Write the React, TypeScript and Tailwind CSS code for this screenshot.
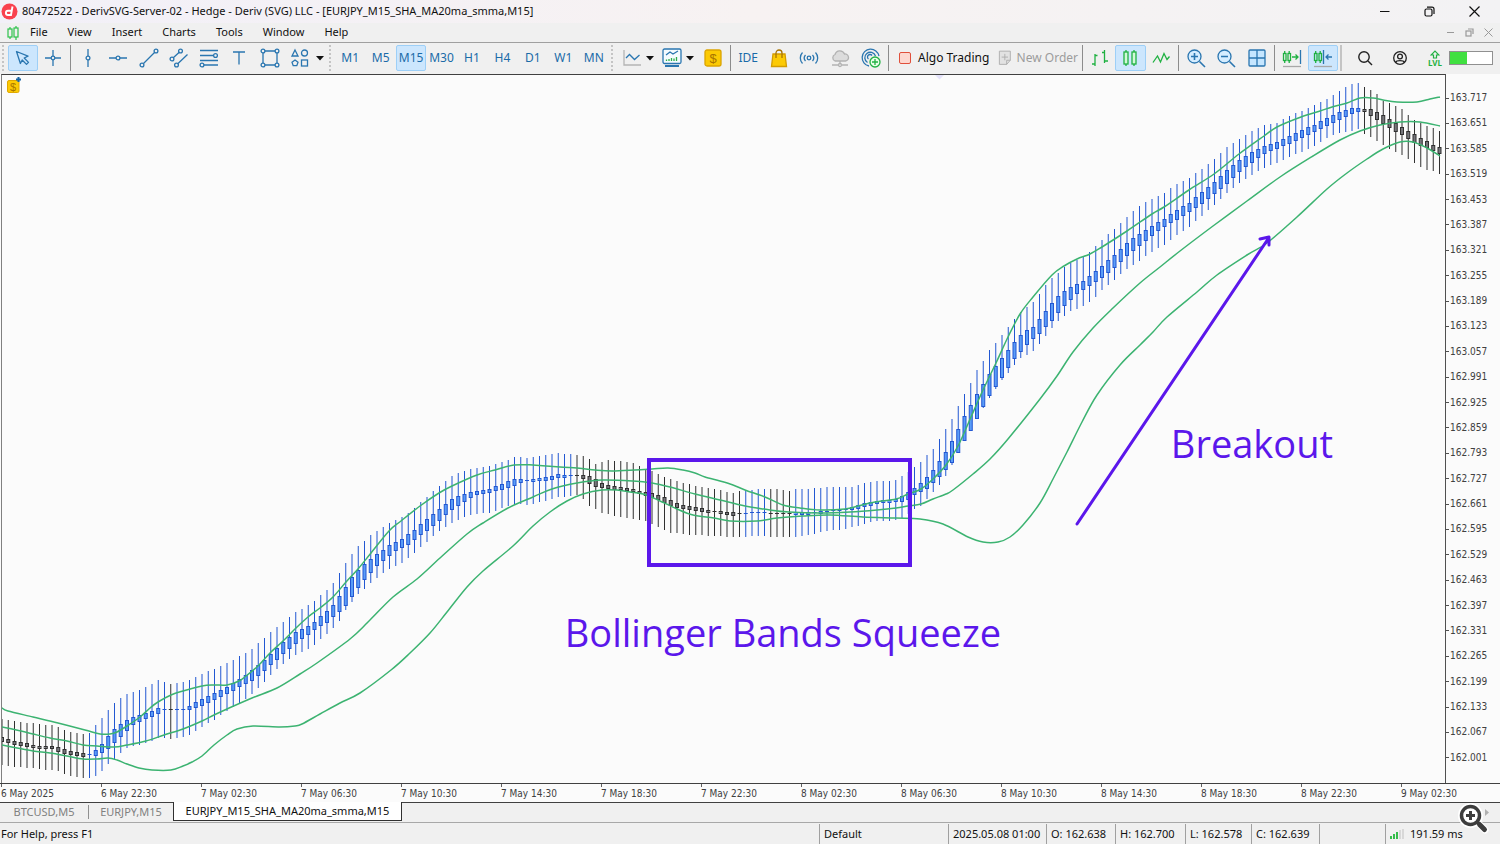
import type { ReactNode } from "react";

const MENU = ["File", "View", "Insert", "Charts", "Tools", "Window", "Help"];
const TIMEFRAMES = ["M1", "M5", "M15", "M30", "H1", "H4", "D1", "W1", "MN"];

const PRICES = [
  "163.717", "163.651", "163.585", "163.519", "163.453", "163.387", "163.321", "163.255", "163.189",
  "163.123", "163.057", "162.991", "162.925", "162.859", "162.793", "162.727", "162.661", "162.595",
  "162.529", "162.463", "162.397", "162.331", "162.265", "162.199", "162.133", "162.067", "162.001",
];

const TIMES = [
  "6 May 2025", "6 May 22:30", "7 May 02:30", "7 May 06:30", "7 May 10:30", "7 May 14:30", "7 May 18:30",
  "7 May 22:30", "8 May 02:30", "8 May 06:30", "8 May 10:30", "8 May 14:30", "8 May 18:30", "8 May 22:30",
  "9 May 02:30",
];

// x, high, body top, body bottom, low
const CANDLE_KEYS = [
  [2, 719, 737, 741, 765], [8, 720, 739, 742, 766], [21, 722, 742, 745, 767], [39, 724, 746, 748, 769],
  [52, 725, 746, 748, 770], [58, 727, 747, 751, 771], [71, 732, 751, 754, 776], [83, 734, 753, 756, 778],
  [89, 734, 754, 755, 778], [96, 725, 750, 755, 776], [102, 718, 744, 752, 771], [108, 710, 736, 748, 764],
  [114, 703, 729, 742, 759], [121, 698, 724, 736, 753], [127, 694, 720, 730, 748], [133, 692, 717, 724, 746],
  [146, 687, 713, 718, 743], [158, 680, 708, 713, 738], [164, 682, 709, 710, 738], [171, 684, 709, 710, 739],
  [183, 682, 709, 710, 737], [189, 680, 706, 709, 735], [202, 674, 699, 705, 727], [214, 669, 693, 699, 720],
  [227, 663, 687, 693, 711], [246, 653, 675, 683, 699], [252, 649, 670, 680, 694], [264, 638, 660, 670, 682],
  [277, 627, 648, 659, 669], [289, 617, 637, 648, 659], [296, 612, 632, 643, 655], [302, 609, 629, 638, 652],
  [308, 605, 626, 634, 649], [314, 601, 622, 629, 645], [327, 590, 611, 622, 634], [333, 583, 605, 616, 628],
  [339, 574, 597, 611, 622], [346, 563, 587, 605, 610], [352, 554, 577, 596, 602], [358, 546, 570, 587, 594],
  [364, 541, 564, 579, 589], [371, 535, 559, 572, 583], [377, 531, 554, 565, 578], [383, 527, 550, 560, 573],
  [389, 523, 545, 555, 569], [396, 520, 542, 550, 566], [402, 517, 539, 547, 563], [408, 513, 534, 544, 558],
  [414, 508, 530, 539, 553], [427, 497, 519, 530, 542], [439, 486, 509, 520, 531], [452, 476, 499, 509, 523],
  [464, 471, 494, 501, 517], [477, 468, 491, 494, 514], [489, 466, 489, 492, 513], [508, 460, 481, 487, 506],
  [514, 457, 479, 485, 504], [521, 457, 479, 482, 504], [527, 458, 480, 481, 505], [546, 455, 477, 480, 501],
  [558, 453, 474, 477, 497], [571, 454, 475, 476, 496], [577, 455, 475, 476, 495], [583, 456, 475, 478, 499],
  [589, 459, 476, 483, 506], [596, 464, 479, 486, 509], [602, 462, 483, 487, 513], [608, 460, 485, 488, 514],
  [621, 461, 487, 489, 517], [633, 463, 489, 491, 519], [645, 469, 492, 495, 521], [652, 471, 493, 497, 524],
  [658, 474, 495, 499, 527], [664, 477, 497, 502, 530], [670, 479, 500, 505, 533], [677, 481, 503, 507, 533],
  [689, 484, 506, 509, 535], [702, 487, 508, 511, 535], [714, 489, 511, 512, 536], [733, 493, 512, 515, 537],
  [739, 491, 513, 514, 537], [758, 489, 512, 513, 536], [777, 489, 513, 514, 537], [789, 491, 513, 514, 537],
  [796, 489, 512, 514, 537], [808, 489, 512, 514, 535], [827, 487, 511, 512, 531], [845, 487, 509, 510, 529],
  [852, 487, 507, 509, 527], [858, 485, 505, 508, 526], [870, 482, 502, 505, 522], [883, 481, 500, 502, 521],
  [896, 480, 499, 501, 520], [902, 476, 496, 501, 518], [908, 472, 492, 499, 514], [914, 467, 488, 494, 509],
  [921, 462, 483, 491, 506], [927, 455, 477, 488, 499], [933, 449, 470, 482, 492], [939, 440, 462, 476, 486],
  [946, 429, 452, 469, 476], [952, 419, 441, 462, 465], [958, 406, 430, 452, 453], [964, 395, 417, 441, 441],
  [971, 383, 405, 430, 430], [977, 370, 394, 418, 418], [983, 361, 384, 406, 408], [989, 351, 375, 396, 399],
  [996, 343, 366, 386, 389], [1002, 335, 358, 377, 380], [1008, 327, 350, 367, 373], [1014, 320, 343, 359, 366],
  [1020, 313, 336, 352, 358], [1027, 307, 330, 344, 355], [1033, 302, 327, 338, 351], [1039, 295, 320, 333, 345],
  [1045, 286, 312, 327, 337], [1052, 278, 303, 320, 328], [1058, 273, 296, 312, 321], [1064, 267, 291, 305, 316],
  [1071, 263, 287, 299, 311], [1077, 260, 284, 293, 309], [1083, 257, 281, 289, 306], [1089, 252, 276, 285, 302],
  [1096, 246, 271, 281, 297], [1102, 240, 266, 277, 290], [1114, 229, 255, 267, 280], [1127, 217, 243, 255, 269],
  [1139, 206, 234, 245, 261], [1152, 199, 226, 235, 252], [1164, 193, 219, 226, 245], [1177, 184, 210, 219, 235],
  [1189, 178, 203, 211, 227], [1202, 169, 192, 203, 216], [1214, 159, 182, 193, 205], [1227, 147, 170, 183, 193],
  [1239, 139, 160, 171, 183], [1252, 131, 152, 162, 175], [1264, 125, 146, 153, 168], [1277, 123, 142, 148, 163],
  [1289, 116, 136, 143, 157], [1302, 111, 130, 137, 152], [1314, 105, 125, 131, 146], [1327, 99, 118, 125, 138],
  [1339, 91, 112, 119, 133], [1352, 84, 108, 113, 131], [1358, 83, 108, 111, 129], [1364, 87, 109, 111, 134],
  [1371, 90, 109, 115, 137], [1377, 94, 112, 119, 141], [1383, 101, 115, 123, 145], [1389, 103, 119, 127, 149],
  [1402, 109, 127, 134, 155], [1414, 120, 134, 142, 163], [1427, 126, 141, 147, 170], [1433, 128, 145, 150, 171],
  [1440, 131, 147, 153, 174],
];

const UPPER = "2,708 8,711 33,717 58,723 85,730 100,734 110,734 117,732 127,726 140,717 150,708 158,702 171,695 183,691 202,686 214,685 227,685 239,681 246,676 258,666 270,653 283,641 296,628 308,617 320,608 333,597 346,582 358,569 371,553 389,531 401,521 420,506 439,493 452,486 477,475 495,470 514,465 533,465 546,466 577,468 595,470 612,471 635,470 652,469 668,468 683,470 695,473 705,477 720,481 733,485 745,490 765,497 783,505 800,508 820,510 845,509 858,506 875,502 896,499 908,494 921,489 933,479 946,465 958,446 971,417 983,390 996,363 1008,337 1020,314 1033,297 1052,275 1064,266 1077,259 1090,254 1102,247 1127,231 1152,214 1164,207 1189,190 1214,174 1239,154 1264,136 1277,127 1301,117 1320,111 1332,107 1347,103 1360,98 1373,98 1383,100 1397,102 1417,102 1430,99 1440,97";
const MIDDLE = "2,727 21,731 33,734 50,738 67,741 83,745 97,746 114,747 127,745 146,741 164,735 183,729 202,721 214,715 227,709 252,698 277,688 300,674 317,663 350,639 368,622 393,597 417,579 440,558 467,534 483,523 508,508 533,497 552,489 577,483 602,480 633,481 652,483 670,487 695,494 720,500 745,506 770,510 789,512 820,513 850,512 877,510 896,508 908,506 921,504 933,499 946,494 953,490 973,474 990,459 1008,439 1040,399 1057,376 1073,352 1093,328 1113,308 1140,283 1160,267 1180,251 1213,226 1247,201 1280,177 1313,156 1340,140 1360,131 1380,125 1400,122 1420,122 1440,126";
const LOWER = "2,745 17,748 33,751 50,753 67,756 83,759 97,759 108,758 117,760 127,764 139,768 152,770 171,770 183,766 192,762 202,756 214,745 227,735 237,729 253,726 280,727 295,726 302,724 320,714 340,703 360,693 391,670 410,653 430,633 447,612 467,587 483,571 513,546 533,526 550,512 567,501 583,494 602,490 617,490 630,492 643,494 658,500 677,509 693,515 714,518 730,521 757,521 777,518 803,516 830,515 863,517 896,518 920,519 943,524 968,537 983,542 998,542 1010,537 1023,525 1040,503 1053,479 1067,452 1082,422 1097,395 1120,365 1140,345 1153,332 1167,317 1197,292 1217,275 1247,255 1267,243 1297,217 1327,189 1347,173 1367,159 1383,149 1400,142 1413,142 1427,148 1440,156";

// Catmull-Rom curve through the points
const smooth = (list: string) => {
  const p = list.split(" ").map((s) => s.split(",").map(Number));
  let d = `M${p[0][0]} ${p[0][1]}`;
  for (let i = 0; i < p.length - 1; i++) {
    const p0 = p[i - 1] ?? p[i];
    const p1 = p[i];
    const p2 = p[i + 1];
    const p3 = p[i + 2] ?? p2;
    d += `C${p1[0] + (p2[0] - p0[0]) / 6} ${p1[1] + (p2[1] - p0[1]) / 6} ${p2[0] - (p3[0] - p1[0]) / 6} ${p2[1] - (p3[1] - p1[1]) / 6} ${p2[0]} ${p2[1]}`;
  }
  return d;
};

const isBearish = (i: number) =>
  i < 14 || i === 27 || (i > 91 && i < 119) || (i > 122 && i < 127) || i > 217;

const candles = Array.from({ length: 231 }, (_, i) => {
  const x = 2 + i * 6.25;
  let k = CANDLE_KEYS.findIndex((key) => key[0] >= x);
  if (k < 1) k = 1;
  const a = CANDLE_KEYS[k - 1];
  const b = CANDLE_KEYS[k];
  const t = (x - a[0]) / (b[0] - a[0]);
  const [high, top, bottom, low] = [1, 2, 3, 4].map((n) => Math.round(a[n] + (b[n] - a[n]) * t));
  return { x, high, top, bottom, low, bear: isBearish(i) };
});

const Candles = () => (
  <>
    {candles.map((c, i) => {
      const line = c.bear ? "#303030" : "#2257d2";
      const h = c.bottom - c.top;
      return (
        <g key={i}>
          <path d={`M${c.x} ${c.high}V${c.low}`} stroke={line} strokeWidth="1" />
          {h < 2 ? (
            <rect x={c.x - 2} y={c.top} width="4" height="1" fill={line} />
          ) : (
            <rect x={c.x - 1.5} y={c.top + 0.5} width="3" height={h} fill={c.bear ? "#77777c" : "#5a9cf8"} stroke={line} />
          )}
        </g>
      );
    })}
  </>
);

const Chart = () => (
  <div className="relative ml-px min-w-0 flex-1 border-t border-r border-l border-t-[#404040] border-r-[#505050] border-l-[#808080]">
    <svg className="absolute inset-0 h-full w-full" viewBox="2 75 1443 708" preserveAspectRatio="none" fill="none">
      <path d="M935 75h9l-4.500 4.500z" fill="#e4e2fa" />
      <Candles />
      <g stroke="#3cb371" strokeWidth="1.500" strokeLinejoin="round">
        <path d={smooth(UPPER)} />
        <path d={smooth(MIDDLE)} />
        <path d={smooth(LOWER)} />
      </g>
      <g stroke="#5b17eb" strokeWidth="4">
        <rect x="649" y="460" width="261" height="105" />
        <path d="M1077 524 1268 239M1260 239l9-2v8" strokeWidth="3" strokeLinecap="round" strokeLinejoin="round" />
      </g>
    </svg>
    <svg className="absolute top-[2px] left-[5px] h-[16px] w-[15px]" viewBox="0 0 15 16" fill="none">
      <rect x="0.500" y="3.500" width="11.500" height="12" rx="1.500" fill="#fcca04" stroke="#e0a800" />
      <text x="3" y="13.500" fontSize="11" fill="#a87400" fontFamily="Liberation Sans, sans-serif">$</text>
      <path d="M11.500 0v5M9 2.500h5" stroke="#1a66a5" strokeWidth="2" />
    </svg>
    <div className="absolute top-[75.200%] left-[39%] font-['Open_Sans',sans-serif] text-[38px] leading-[50px] whitespace-nowrap text-[#5b17eb]">
      Bollinger Bands Squeeze
    </div>
    <div className="absolute top-[48.500%] left-[81%] font-['Open_Sans',sans-serif] text-[38px] leading-[50px] whitespace-nowrap text-[#5b17eb]">
      Breakout
    </div>
  </div>
);

const PriceScale = () => (
  <ul className="flex w-[54px] shrink-0 flex-col justify-between pt-[17px] pb-[18px] font-['DejaVu_Sans_Condensed','DejaVu_Sans',sans-serif] text-[10px] leading-[14px] text-[#404040]">
    {PRICES.map((p) => (
      <li key={p} className="flex items-center gap-px">
        <span className="h-px w-[3px] bg-[#505050]" />
        {p}
      </li>
    ))}
  </ul>
);

const TimeScale = () => (
  <ul className="grid h-[18px] shrink-0 grid-cols-15 font-['DejaVu_Sans_Condensed','DejaVu_Sans',sans-serif] text-[10px] leading-[13px] text-[#404040]">
    {TIMES.map((t) => (
      <li key={t} className="pl-px whitespace-nowrap">
        <span className="block h-[3px] w-px bg-[#606060]" />
        {t}
      </li>
    ))}
  </ul>
);

const Icon = ({ children, size = 20 }: { children: ReactNode; size?: number }) => (
  <svg width={size} height={size} viewBox={`0 0 ${size} ${size}`} fill="none" stroke="#2a76b0" strokeWidth="1.300">
    {children}
  </svg>
);

const Tool = ({ label, active, children }: { label: string; active?: boolean; children: ReactNode }) => (
  <button
    aria-label={label}
    className={
      active
        ? "flex h-[26px] items-center justify-center rounded-xs border border-[#9dcff7] bg-[#cce6fd] text-[#1a6ba8]"
        : "flex h-[26px] items-center justify-center text-[#1a6ba8]"
    }
  >
    {children}
  </button>
);

const Sep = () => <span className="h-[26px] w-px shrink-0 bg-[#8c8c8c]" />;
const Grip = () => <span className="h-[26px] w-0 shrink-0 border-l-2 border-dotted border-[#c4c4c4]" />;
const Caret = ({ label }: { label: string }) => (
  <button aria-label={label} className="flex h-[26px] w-[10px] items-center justify-center">
    <svg width="8" height="5" viewBox="0 0 8 5"><path d="M0 0h8L4 4.500z" fill="#111" /></svg>
  </button>
);

const DrawingTools = () => (
  <>
    <div className="ml-[4px] grid w-[60px] grid-cols-2">
      <Tool label="Cursor" active>
        <Icon><path d="M3.500 3.500 15 8.200 11.200 10l4.300 4.400-2 2-4.300-4.400-1.800 3.500z" strokeLinejoin="round" /></Icon>
      </Tool>
      <Tool label="Crosshair">
        <Icon><path d="M2 10h6M12 10h6M10 2v6M10 12v6" /><circle cx="10" cy="10" r="1.800" /></Icon>
      </Tool>
    </div>
    <span className="w-[2px]" />
    <Sep />
    <div className="ml-[2px] grid w-[242px] grid-cols-8">
      <Tool label="Vertical line"><Icon><path d="M10 1v7M10 12v7" /><circle cx="10" cy="10" r="1.900" /></Icon></Tool>
      <Tool label="Horizontal line"><Icon><path d="M1 10h7M12 10h7" /><circle cx="10" cy="10" r="1.900" /></Icon></Tool>
      <Tool label="Trendline"><Icon><path d="M4.500 15.500 15.500 4.500" /><circle cx="3" cy="17" r="1.900" /><circle cx="17" cy="3" r="1.900" /></Icon></Tool>
      <Tool label="Channel"><Icon><path d="M4 10l6.500-6M8.500 16 18.500 6.500" /><circle cx="3" cy="11" r="1.900" /><circle cx="11.500" cy="3" r="1.900" /><circle cx="7.500" cy="17" r="1.900" /></Icon></Tool>
      <Tool label="Fibonacci"><Icon><path d="M1 2.500h18M1 7.500h13M1 12.500h18M5 17h14" /><circle cx="16.500" cy="7.500" r="1.900" /><circle cx="3" cy="17" r="1.900" /></Icon></Tool>
      <Tool label="Text"><Icon><path d="M4 4h12M10 4v12.500" /></Icon></Tool>
      <Tool label="Rectangle"><Icon><path d="M5 3h10M5 17h10M3 5v10M17 5v10" /><circle cx="3" cy="3" r="1.900" /><circle cx="17" cy="3" r="1.900" /><circle cx="3" cy="17" r="1.900" /><circle cx="17" cy="17" r="1.900" /></Icon></Tool>
      <Tool label="Shapes"><Icon><path d="M5 2 8 8H2z" /><circle cx="14.500" cy="5" r="3" /><path d="M5 12l3 2.300-1.200 3.400H3.200L2 14.300z" /><rect x="11.500" y="12" width="6" height="6" /></Icon></Tool>
    </div>
    <Caret label="More shapes" />
  </>
);

const Timeframes = () => (
  <div className="ml-1 grid w-[274px] grid-cols-9 text-[12px]">
    {TIMEFRAMES.map((tf) => (
      <Tool key={tf} label={tf} active={tf === "M15"}>{tf}</Tool>
    ))}
  </div>
);

const ServiceTools = () => (
  <>
    <div className="ml-[6px] grid w-[26px]">
      <Tool label="Chart type"><Icon><path d="M2 2v15h17" stroke="#b4b4b4" /><path d="m4 10 3.500-3.500 5 5 5-4.500" /></Icon></Tool>
    </div>
    <Caret label="Chart types" />
    <div className="ml-[4px] grid w-[26px]">
      <Tool label="Indicators">
        <Icon>
          <rect x="1" y="1" width="18" height="14.500" rx="1.500" fill="#f4fbff" />
          <path d="m4 7 4-3 3 2 5-3" />
          <path d="M4.500 13v-1.500M7 13v-2M9.500 13v-3M12 13v-2.500M14.500 13v-4" stroke="#2cae4a" />
          <path d="M3 18h14" strokeWidth="2" />
        </Icon>
      </Tool>
    </div>
    <Caret label="Indicator list" />
    <div className="ml-[5px] grid w-[26px]">
      <Tool label="Market">
        <Icon>
          <rect x="2" y="2" width="16" height="16" rx="2" fill="#fcca04" stroke="#dba400" />
          <text x="6.500" y="14.500" fontSize="13" fill="#a87400" stroke="none" fontFamily="Liberation Sans, sans-serif">$</text>
        </Icon>
      </Tool>
    </div>
    <span className="w-1" />
    <Sep />
    <div className="mr-[2px] ml-[2px] grid w-[153px] grid-cols-5 text-[12px]">
      <Tool label="IDE">IDE</Tool>
      <Tool label="Store">
        <Icon>
          <path d="M4 6h12l1.500 12.500h-15z" fill="#fcca04" stroke="#d39c00" />
          <path d="M7 10V5a3 3 0 0 1 6 0v5" stroke="#a87400" />
        </Icon>
      </Tool>
      <Tool label="Signals">
        <Icon><circle cx="10" cy="10" r="1.800" /><path d="M6.500 7a4.500 4.500 0 0 0 0 6M13.500 7a4.500 4.500 0 0 1 0 6M3.500 4.500a8 8 0 0 0 0 11M16.500 4.500a8 8 0 0 1 0 11" /></Icon>
      </Tool>
      <Tool label="Virtual hosting">
        <Icon>
          <g stroke="#b2b2b2">
            <path d="M5 13a3.500 3.500 0 0 1 0-6.500 5 5 0 0 1 9.500-.5A3.500 3.500 0 0 1 15.500 13z" fill="#dcdcdc" />
            <path d="M10 13v3M2 17h6M12 17h6" /><circle cx="10" cy="17" r="1.500" />
          </g>
        </Icon>
      </Tool>
      <Tool label="Copy trading">
        <Icon>
          <path d="M8 18A8.500 8.500 0 1 1 18 8M6.500 14.500a5.500 5.500 0 1 1 8-6.500M7.500 11a2.500 2.500 0 1 1 3.500-3.500" />
          <circle cx="14" cy="14" r="5" fill="#e8ffe8" stroke="#22b244" /><path d="M14 11v6M11 14h6" stroke="#22b244" />
        </Icon>
      </Tool>
    </div>
    <Sep />
    <button className="ml-[10px] flex h-[26px] w-[92px] items-center gap-[7px] text-[12px] whitespace-nowrap text-[#111]">
      <span className="h-[12px] w-[12px] rounded-xs border border-[#e0503c] bg-[#fdd8d0]" />
      Algo Trading
    </button>
    <button className="ml-[7px] flex h-[26px] w-[80px] items-center gap-[4px] text-[12px] whitespace-nowrap text-[#9c9c9c]" disabled>
      <svg width="16" height="18" viewBox="0 0 16 18" fill="none" stroke="#adadad">
        <path d="M1.500 1.500h12v10l-4 4.500h-8z" fill="#e2e2e2" /><path d="M13.500 11.500h-4V16M7.500 4.500v7M4 8h7" />
      </svg>
      New Order
    </button>
    <span className="w-1" />
    <Sep />
  </>
);

const ChartTools = () => (
  <>
    <div className="ml-[2px] grid w-[91px] grid-cols-3">
      <Tool label="Bar chart"><Icon><path d="M5 6v12M2 16h3M5 7.500h2.500M14.500 2v13M12 4.500h2.500M14.500 13H18" stroke="#1fb141" /></Icon></Tool>
      <Tool label="Candlesticks" active>
        <Icon><g stroke="#1fb141"><rect x="4" y="4" width="4" height="12" fill="#d2f8d8" /><rect x="12" y="4" width="4" height="12" fill="#d2f8d8" /><path d="M6 2v2M6 16v2M14 2v2M14 16v2" /></g></Icon>
      </Tool>
      <Tool label="Line chart"><Icon><path d="M2 14.500 6.500 8l3 6L13 5.500l3 6 2.500-3" stroke="#1fb141" /></Icon></Tool>
    </div>
    <span className="w-[2px]" />
    <Sep />
    <div className="ml-[2px] grid w-[91px] grid-cols-3">
      <Tool label="Zoom in"><Icon><circle cx="8.500" cy="8.500" r="6.500" fill="#d5edff" /><path d="M13.500 13.500 19 19M8.500 5v7M5 8.500h7" strokeWidth="1.600" /></Icon></Tool>
      <Tool label="Zoom out"><Icon><circle cx="8.500" cy="8.500" r="6.500" fill="#d5edff" /><path d="M13.500 13.500 19 19M5 8.500h7" strokeWidth="1.600" /></Icon></Tool>
      <Tool label="Tile windows"><Icon><rect x="2" y="2" width="16" height="16" rx="1" fill="#c5e6ff" /><path d="M10 2v16M2 10h16" /></Icon></Tool>
    </div>
    <span className="w-[2px]" />
    <Sep />
    <div className="ml-[2px] grid w-[61px] grid-cols-2">
      <Tool label="Auto scroll">
        <Icon>
          <g stroke="#1fb141"><rect x="1.500" y="5.500" width="2.500" height="7" /><rect x="6" y="5.500" width="2.500" height="7" /><path d="M2.700 3v2.500M2.700 12.500V15M7.200 3v2.500M7.200 12.500V15M10 9h6M13.500 6.500 16 9l-2.500 2.500" /></g>
          <path d="M18.500 2v14" /><path d="M1 18.500h18" stroke="#a8a8a8" />
        </Icon>
      </Tool>
      <Tool label="Chart shift" active>
        <Icon>
          <g stroke="#1fb141"><rect x="1.500" y="5.500" width="2.500" height="7" /><rect x="6" y="5.500" width="2.500" height="7" /><path d="M2.700 3v2.500M2.700 12.500V15M7.200 3v2.500M7.200 12.500V15" /></g>
          <path d="M10.500 2v14M19 9h-6M15.500 6.500 13 9l2.500 2.500" /><path d="M1 18.500h18" stroke="#a8a8a8" />
        </Icon>
      </Tool>
    </div>
    <span className="ml-[2px] h-[26px] w-[2px] shrink-0 bg-[#c4c4c4]" />
  </>
);

const Toolbar = () => (
  <div className="flex h-[32px] shrink-0 items-start border-t border-[#a0a0a0] bg-[#f0f0f0] pt-[2px] pl-[2px]">
    <Grip />
    <DrawingTools />
    <span className="w-[4px]" />
    <Grip />
    <Timeframes />
    <span className="w-[2px]" />
    <Grip />
    <ServiceTools />
    <ChartTools />
    <div className="ml-auto flex h-[26px] items-center pr-[7px]">
      <button aria-label="Search" className="mr-[19px]">
        <svg width="16" height="16" viewBox="0 0 16 16" fill="none" stroke="#222" strokeWidth="1.400"><circle cx="7" cy="7" r="5.200" /><path d="m11 11 4 4" /></svg>
      </button>
      <button aria-label="Account" className="mr-[20px]">
        <svg width="16" height="16" viewBox="0 0 16 16" fill="none" stroke="#222" strokeWidth="1.300"><circle cx="8" cy="8" r="6.300" /><circle cx="8" cy="6.500" r="2.400" /><path d="M3.500 12.500c1-2.500 8-2.500 9 0" /></svg>
      </button>
      <button aria-label="Level" className="mr-[7px] flex w-[14px] flex-col items-center text-[8px] leading-[8px] font-bold text-[#1fb141]">
        <svg width="10" height="9" viewBox="0 0 10 9" fill="none" stroke="#1fb141" strokeWidth="1.200"><path d="M3.500 5H1l4-4 4 4H6.500v3h-3z" /></svg>
        LVL
      </button>
      <span className="flex h-[14px] w-[44px] border border-[#909090] bg-white">
        <span className="w-2/5 bg-[#40e040]" />
      </span>
    </div>
  </div>
);

const TitleBar = () => (
  <header className="flex h-[23px] shrink-0 items-center bg-linear-to-r from-[#f2f0f8] via-[#f7f2f2] to-[#f3f2f4] pl-[1px] text-[#111]">
    <svg width="17" height="17" viewBox="0 0 17 17">
      <circle cx="8.500" cy="8.500" r="8" fill="#f9414f" />
      <path d="M11.500 3.500 10 12H7a2 2 0 0 1 0-4.200h3.500" fill="none" stroke="#fff" strokeWidth="1.900" />
    </svg>
    <h1 className="ml-[4px] text-[11px] whitespace-nowrap">
      80472522 - DerivSVG-Server-02 - Hedge - Deriv (SVG) LLC - [EURJPY_M15_SHA_MA20ma_smma,M15]
    </h1>
    <div className="ml-auto flex items-center gap-[34px] pr-[20px]">
      <button aria-label="Minimize"><svg width="11" height="11" viewBox="0 0 11 11"><path d="M1 5.500h9.500" stroke="#111" /></svg></button>
      <button aria-label="Restore"><svg width="11" height="11" viewBox="0 0 11 11" fill="none" stroke="#111" strokeWidth="1.200"><rect x="1" y="3" width="7" height="7" rx="1.500" /><path d="M3 1.200h5a2 2 0 0 1 2 2V8" /></svg></button>
      <button aria-label="Close"><svg width="11" height="11" viewBox="0 0 11 11"><path d="m.500.500 10 10m0-10-10 10" stroke="#111" strokeWidth="1.200" /></svg></button>
    </div>
  </header>
);

const MenuBar = () => (
  <nav className="flex h-[19px] shrink-0 items-center bg-[#f0f0f0] pl-[7px] text-[11px] text-[#111]">
    <svg width="12" height="14" viewBox="0 0 12 14" fill="none" stroke="#2dc24b" strokeWidth="1.200">
      <rect x="1" y="3" width="4" height="8" /><rect x="7" y="2" width="4" height="9" /><path d="M3 1v2M3 11v2M9 0v2M9 11v3" />
    </svg>
    <div className="ml-[11px] flex gap-[20px]">
      {MENU.map((m) => (
        <button key={m}>{m}</button>
      ))}
    </div>
    <div className="ml-auto flex items-center gap-[10px] pr-[7px]">
      <button aria-label="Minimize chart"><svg width="9" height="9" viewBox="0 0 9 9"><path d="M1 4.500h7" stroke="#999" /></svg></button>
      <button aria-label="Restore chart"><svg width="9" height="9" viewBox="0 0 9 9" fill="none" stroke="#999" strokeWidth="1.200"><rect x="1" y="3" width="5" height="5" /><path d="M3 1h5v5" /></svg></button>
      <button aria-label="Close chart"><svg width="9" height="9" viewBox="0 0 9 9"><path d="m.500.500 8 8m0-8-8 8" stroke="#999" /></svg></button>
    </div>
  </nav>
);

const ChartTabs = () => (
  <div className="flex h-[21px] shrink-0 items-start border-b border-[#a8a8a8] bg-[#f0f0f0] text-[11px] leading-[18px] text-[#808080]">
    <button className="h-[19px] w-[88px] border-t border-[#404040]">BTCUSD,M5</button>
    <span className="flex h-[19px] w-px items-center border-t border-[#404040]"><span className="h-[14px] w-px bg-[#909090]" /></span>
    <button className="h-[19px] w-[84px] border-t border-[#404040]">EURJPY,M15</button>
    <button className="h-[19px] w-[229px] border-r border-b border-l border-[#303030] bg-white text-[#111]">
      EURJPY_M15_SHA_MA20ma_smma,M15
    </button>
    <span className="flex h-[19px] flex-1 items-center justify-end border-t border-[#404040] pr-[11px]">
      <svg width="4" height="7" viewBox="0 0 4 7"><path d="M0 0v7l4-3.500z" fill="#b0b0b0" /></svg>
    </span>
  </div>
);

const StatusBar = () => (
  <footer className="relative flex h-[21px] shrink-0 items-center bg-[#f0f0f0] text-[11px] leading-[20px] whitespace-nowrap text-[#111] [&>span]:h-[20px] [&>span+span]:border-l [&>span+span]:border-[#a0a0a0] [&>span+span]:pl-[4px]">
    <span className="flex-1 pl-px">For Help, press F1</span>
    <span className="w-[129px]">Default</span>
    <span className="w-[98px]">2025.05.08 01:00</span>
    <span className="w-[69px]">O: 162.638</span>
    <span className="w-[70px]">H: 162.700</span>
    <span className="w-[66px]">L: 162.578</span>
    <span className="w-[68px]">C: 162.639</span>
    <span className="w-[66px]" />
    <span className="flex w-[115px] items-center gap-[6px]">
      <svg width="14" height="10" viewBox="0 0 14 10" fill="#35bd4b">
        <path d="M0 7h2v3H0zM3 5h2v5H3zM6 3h2v7H6z" /><path d="M9 1h2v9H9zM12 0h2v10h-2z" fill="#d8d8d8" />
      </svg>
      191.59 ms
    </span>
    <button aria-label="Enlarge" className="absolute right-[11px] bottom-[10px]">
      <svg width="32" height="32" viewBox="0 0 32 32" fill="none">
        <g stroke="#fff" strokeWidth="7"><circle cx="13.500" cy="13.500" r="9" /><path d="m20 20 8 8" strokeLinecap="round" /></g>
        <circle cx="13.500" cy="13.500" r="9" fill="#fff" stroke="#3d3d3d" strokeWidth="3.500" />
        <path d="m20 20 3 3" stroke="#3d3d3d" strokeWidth="3" /><path d="m22.500 22.500 5 5" stroke="#3d3d3d" strokeWidth="5" strokeLinecap="round" />
        <path d="M13.500 9v9M9 13.500h9" stroke="#3d3d3d" strokeWidth="3" />
      </svg>
    </button>
  </footer>
);

const App = () => (
  <div className="flex h-screen flex-col overflow-hidden bg-[#fbfbfb] font-['Noto_Sans','Open_Sans',sans-serif]">
    <TitleBar />
    <MenuBar />
    <Toolbar />
    <main className="flex min-h-0 flex-1 flex-col bg-[#fbfbfb]">
      <section className="flex min-h-0 flex-1 border-b border-[#404040]">
        <Chart />
        <PriceScale />
      </section>
      <TimeScale />
    </main>
    <ChartTabs />
    <StatusBar />
  </div>
);

export default App;
